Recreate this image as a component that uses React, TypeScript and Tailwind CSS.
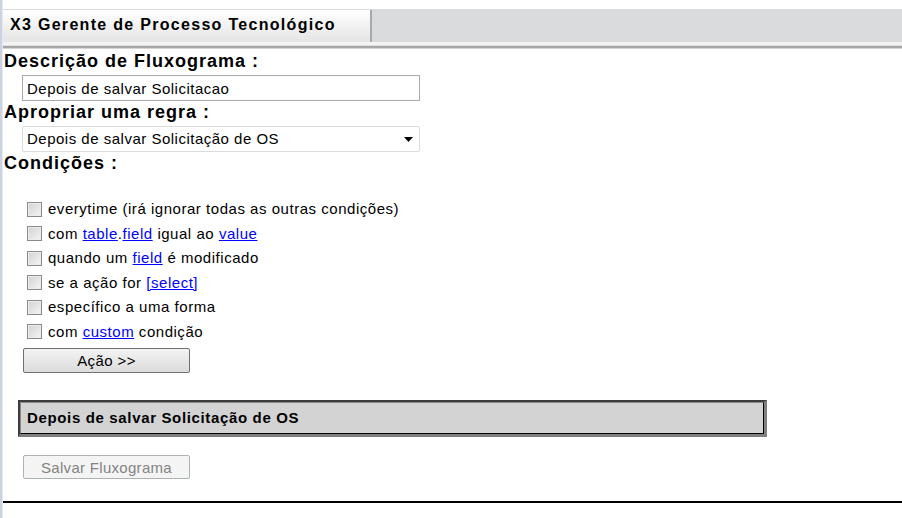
import React from 'react';

const conditions: React.ReactNode[] = [
  <>everytime (irá ignorar todas as outras condições)</>,
  <>
    com <a className="text-[#0000ff] underline">table</a>.<a className="text-[#0000ff] underline">field</a> igual ao{' '}
    <a className="text-[#0000ff] underline">value</a>
  </>,
  <>
    quando um <a className="text-[#0000ff] underline">field</a> é modificado
  </>,
  <>
    se a ação for <a className="text-[#0000ff] underline">[select]</a>
  </>,
  <>específico a uma forma</>,
  <>
    com <a className="text-[#0000ff] underline">custom</a> condição
  </>,
];

const CheckRow: React.FC<{ children: React.ReactNode }> = ({ children }) => (
  <div className="flex items-center h-[24.5px]">
    <span className="ml-[23px] w-[15px] h-[15px] border border-[#8a8a8a] bg-gradient-to-br from-[#d2d2d2] to-[#f4f4f4] shadow-[inset_0_0_0_1px_#ececec]" />
    <span className="ml-[6px] text-[15px] leading-[18px] tracking-[0.53px] text-black">{children}</span>
  </div>
);

export default function App() {
  return (
    <div className="w-[902px] h-[518px] bg-white flex overflow-hidden font-['Liberation_Sans',Arial,sans-serif] text-black">
      <div className="w-[2px] shrink-0 bg-[#cbd2e2]" />
      <div className="w-[1px] shrink-0 bg-[#e6e9f0]" />
      <div className="flex-1 flex flex-col">
        {/* header bar with tab */}
        <div className="h-[9px]" />
        <div className="h-[33px] bg-[#dadbdd] flex">
          <div className="mt-[1px] w-[369px] h-[32px] bg-gradient-to-b from-white to-[#e4e4e4] border-r-2 border-[#a9a9a9] flex items-center pl-[7px] pb-[4px]">
            <span className="text-[16px] font-bold leading-[19px] tracking-[1.3px]">X3 Gerente de Processo Tecnológico</span>
          </div>
        </div>
        <div className="h-[3px] bg-[#f3f3f3]" />
        <div className="h-[1px] bg-[#dedede]" />
        <div className="h-[2px] bg-[#a6a6a6]" />
        <div className="h-[1px] bg-[#d4d4d4]" />

        {/* form */}
        <div className="pl-[1px] flex flex-col">
          <h2 className="mt-[2px] text-[18px] font-bold leading-[21px] tracking-[1px]">Descrição de Fluxograma :</h2>
          <input
            readOnly
            value="Depois de salvar Solicitacao"
            className="mt-[3px] ml-[18px] w-[398px] h-[26px] border border-[#a9a9a9] px-[4px] text-[15px] tracking-[0.5px] outline-none bg-white"
          />
          <h2 className="mt-[1px] text-[18px] font-bold leading-[21px] tracking-[1px]">Apropriar uma regra :</h2>
          <div className="mt-[3px] ml-[18px] w-[398px] h-[26px] border border-[#dcdcdc] rounded-[2px] flex items-center justify-between pl-[4px] pr-[6px]">
            <span className="text-[15px] tracking-[0.5px]">Depois de salvar Solicitação de OS</span>
            <svg width="9" height="5" viewBox="0 0 9 5">
              <path d="M0 0 H9 L4.5 5 Z" fill="#000" />
            </svg>
          </div>
          <h2 className="mt-[1px] text-[18px] font-bold leading-[21px] tracking-[1px]">Condições :</h2>
          <div className="h-[23px]" />
          {conditions.map((c, i) => (
            <CheckRow key={i}>{c}</CheckRow>
          ))}
          <button className="mt-[4px] ml-[19px] w-[167px] h-[25px] border border-[#707070] rounded-[2px] bg-gradient-to-b from-[#f3f3f3] to-[#dcdcdc] text-[15px] tracking-[0.4px] leading-none">
            Ação &gt;&gt;
          </button>

          <div className="mt-[27px] ml-[14px] w-[749px] border-t-2 border-l-2 border-t-[#3c3c3c] border-l-[#3c3c3c] border-r-[3px] border-b-[3px] border-r-[#7f7f7f] border-b-[#7f7f7f]">
            <div className="h-[32px] bg-[#d3d3d3] border-t border-l border-[#8a8a8a] border-r border-b border-r-black border-b-black flex items-center pl-[6px]">
              <span className="text-[15px] font-bold tracking-[0.65px]">Depois de salvar Solicitação de OS</span>
            </div>
          </div>

          <button
            disabled
            className="mt-[18px] ml-[19px] w-[167px] h-[24px] border border-[#adb2b5] rounded-[2px] bg-[#f4f4f4] text-[15px] tracking-[0.3px] text-[#838383] leading-none"
          >
            Salvar Fluxograma
          </button>
        </div>
        <div className="mt-[22px] h-[2px] bg-black" />
      </div>
    </div>
  );
}
